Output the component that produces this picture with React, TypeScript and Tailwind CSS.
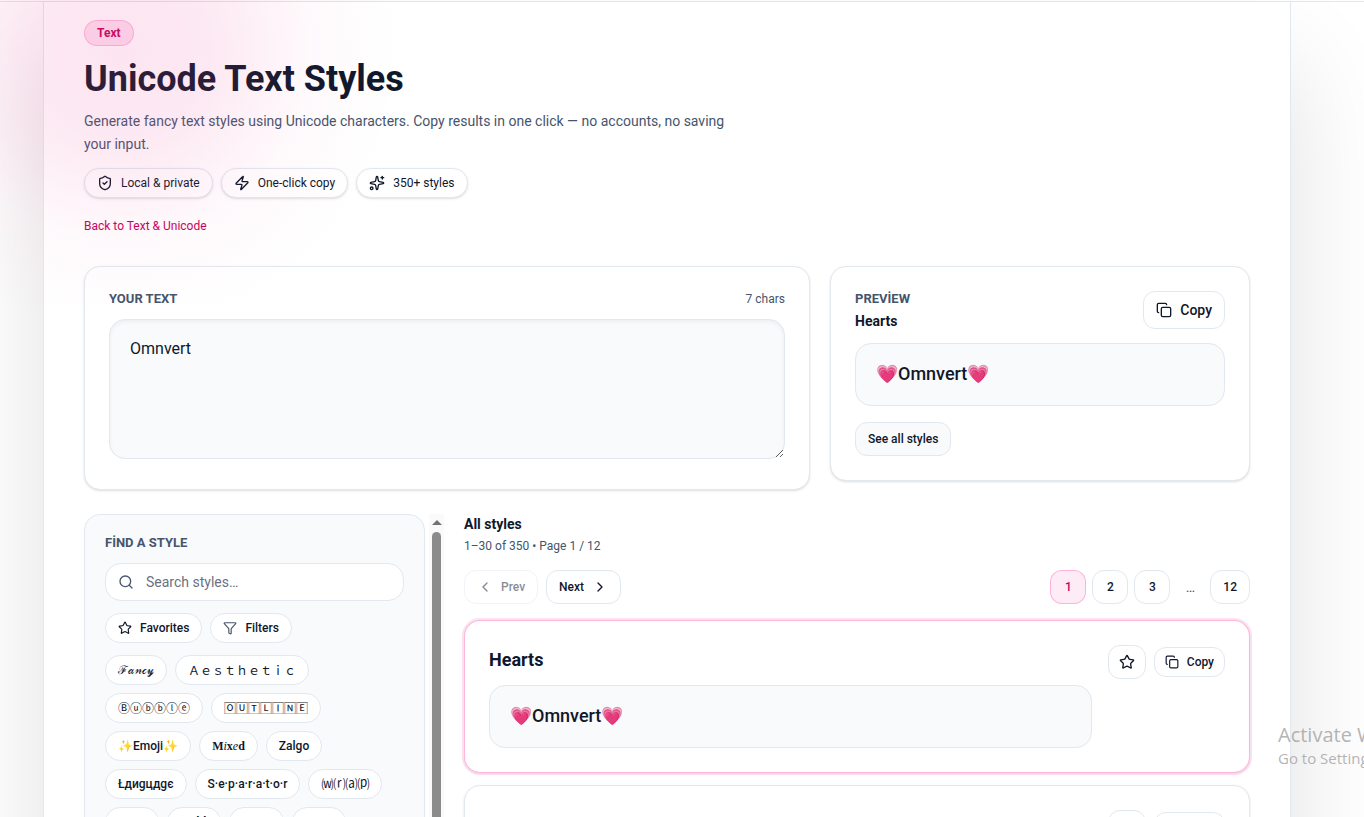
import { useState } from "react";
import type { ReactNode } from "react";
import { ChevronLeft, ChevronRight, Copy, Funnel, Search, ShieldCheck, Sparkles, Star, Zap } from "lucide-react";

const badges = [
    { icon: ShieldCheck, label: "Local & private" },
    { icon: Zap, label: "One-click copy" },
    { icon: Sparkles, label: "350+ styles" },
];

// symbol ranges that read best in the full-width face
const wide = "font-normal font-['Noto_Sans_CJK_JP',sans-serif]";

const tags: { label: ReactNode; className?: string }[] = [
    { label: "ℱ𝒶𝓃𝒸𝓎", className: "font-normal" },
    { label: "Ａｅｓｔｈｅｔｉｃ", className: wide },
    { label: "Ⓑⓤⓑⓑⓛⓔ", className: wide },
    { label: "🄾🅄🅃🄻🄸🄽🄴", className: wide },
    { label: "✨Emoji✨" },
    {
        label: (
            <>
                M<i className="font-normal">i</i>x<i className="font-normal">e</i>d
            </>
        ),
        className: "font-bold font-['Liberation_Serif',serif]",
    },
    { label: "Zalgo" },
    { label: "Łдиgцдgє" },
    { label: "S·e·p·a·r·a·t·o·r" },
    { label: "⒲⒭⒜⒫", className: wide },
    { label: "Rune" },
    { label: "Bold", className: "font-bold" },
    { label: "Wavy" },
    { label: "Star" },
];

const pages = ["1", "2", "3", "…", "12"];

function StyleBox({ children }: { children: ReactNode }) {
    return (
        <div className="rounded-2xl border border-slate-200 bg-slate-50 px-5 pt-[15px] pb-[17px] text-lg leading-[29px] font-medium text-slate-900">
            {children}
        </div>
    );
}

function StyleCard({ name, text, active }: { name: string; text: string; active?: boolean }) {
    return (
        <article
            className={
                active
                    ? "flex items-start justify-between gap-4 rounded-2xl border border-pink-300/80 bg-white p-6 shadow-sm ring-2 ring-pink-200/60"
                    : "flex items-start justify-between gap-4 rounded-2xl border border-slate-200 bg-white p-6 shadow-sm"
            }
        >
            <div className="min-w-0 flex-1">
                <h3 className="mb-[10px] text-lg leading-[30px] font-bold text-slate-900">{name}</h3>
                <StyleBox>{text}</StyleBox>
            </div>
            <div className="flex items-center gap-2">
                <button type="button" aria-label="Favorite" className="rounded-xl border border-slate-200 bg-white px-[10px] py-2 text-slate-900">
                    <Star size={16} />
                </button>
                <button type="button" className="flex items-center gap-2 rounded-xl border border-slate-200 bg-white px-[10px] py-[6px] text-xs font-medium text-slate-900">
                    <Copy size={14} />
                    Copy
                </button>
            </div>
        </article>
    );
}

export default function App() {
    const [text, setText] = useState("Omnvert");
    const [query, setQuery] = useState("");
    const result = `💗${text}💗`;

    return (
        <div className="relative h-screen overflow-hidden bg-white font-['Roboto','Noto_Sans',sans-serif] text-slate-900">
            <div className="h-[2px] border-b border-slate-200" />
            <main className="mr-[73px] ml-[43px] border-x border-slate-200 bg-white px-10 pt-[18px] pb-20 shadow-[0_60px_100px_rgba(0,0,0,0.12)]">
                <header className="flex flex-col items-start">
                    <span className="rounded-full border border-pink-300/70 bg-pink-200/60 px-3 py-1 text-xs font-bold text-pink-700">Text</span>
                    <h1 className="mt-3 text-4xl leading-[42px] font-bold">Unicode Text Styles</h1>
                    <p className="mt-[10px] max-w-[660px] text-sm leading-[23px] text-slate-600">
                        Generate fancy text styles using Unicode characters. Copy results in one click — no accounts, no saving your input.
                    </p>
                    <ul className="mt-3 flex gap-2 text-xs">
                        {badges.map(({ icon: Icon, label }) => (
                            <li key={label} className="flex items-center gap-2 rounded-full border border-slate-200 bg-white px-3 py-[6px] shadow-sm">
                                <Icon size={16} />
                                {label}
                            </li>
                        ))}
                    </ul>
                    <a href="#text" className="mt-5 text-xs text-pink-700">
                        Back to Text &amp; Unicode
                    </a>
                </header>

                <section className="mt-8 grid grid-cols-[minmax(0,1fr)_420px] items-start gap-5">
                    <div className="rounded-2xl border border-slate-200 bg-white px-6 pt-6 pb-[30px] shadow-sm">
                        <div className="flex items-center justify-between text-xs">
                            <label htmlFor="text" className="text-[13px] leading-4 font-bold text-slate-600">
                                YOUR TEXT
                            </label>
                            <span className="text-slate-600">{text.length} chars</span>
                        </div>
                        <textarea
                            id="text"
                            value={text}
                            onChange={(e) => setText(e.target.value)}
                            className="mt-3 block h-[140px] w-full resize-y rounded-2xl border border-slate-200 bg-slate-50 px-5 py-4 text-base leading-[26px] shadow-inner outline-none"
                        />
                    </div>
                    <div className="rounded-2xl border border-slate-200 bg-white p-6 shadow-sm">
                        <div className="flex items-start justify-between">
                            <div>
                                <p className="text-[13px] leading-4 font-bold text-slate-600">PREVİEW</p>
                                <p className="mt-1 text-sm font-bold">Hearts</p>
                            </div>
                            <button type="button" className="flex items-center gap-2 rounded-xl border border-slate-200 bg-white px-3 py-2 text-sm font-medium">
                                <Copy size={16} />
                                Copy
                            </button>
                        </div>
                        <div className="mt-3">
                            <StyleBox>{result}</StyleBox>
                        </div>
                        <button type="button" className="mt-4 rounded-xl border border-slate-200 bg-slate-50 px-3 py-2 text-xs font-medium">
                            See all styles
                        </button>
                    </div>
                </section>

                <section className="mt-6 grid grid-cols-[360px_minmax(0,1fr)] gap-5">
                    <aside className="flex h-[600px] overflow-hidden">
                        <div className="flex-1 rounded-t-2xl border border-slate-200 bg-slate-50 p-5">
                            <label htmlFor="search" className="block text-[13px] leading-4 font-bold text-slate-600">
                                FİND A STYLE
                            </label>
                            <div className="mt-3 flex items-center gap-3 rounded-2xl border border-slate-200 bg-white px-3 py-2 text-slate-600">
                                <Search size={16} />
                                <input
                                    id="search"
                                    type="text"
                                    placeholder="Search styles…"
                                    value={query}
                                    onChange={(e) => setQuery(e.target.value)}
                                    className="h-5 min-w-0 flex-1 text-sm outline-none placeholder:text-gray-500"
                                />
                            </div>
                            <div className="mt-3 flex gap-2 text-xs font-medium">
                                <button type="button" className="flex items-center gap-2 rounded-full border border-slate-200 bg-white px-3 py-[6px]">
                                    <Star size={14} />
                                    Favorites
                                </button>
                                <button type="button" className="flex items-center gap-2 rounded-full border border-slate-200 bg-white px-3 py-[6px]">
                                    <Funnel size={14} className="text-slate-600" />
                                    Filters
                                </button>
                            </div>
                            <div className="mt-3 flex flex-wrap gap-2 text-xs font-medium">
                                {tags.map(({ label, className }, i) => (
                                    <button key={i} type="button" className="h-[30px] min-w-[54px] rounded-full border border-slate-200 bg-white px-3">
                                        <span className={className}>{label}</span>
                                    </button>
                                ))}
                            </div>
                        </div>
                        <div aria-hidden className="ml-1 flex w-[15px] flex-col items-center bg-neutral-50 pt-[6px]">
                            <span className="size-0 border-x-[5px] border-b-[5px] border-x-transparent border-b-neutral-500" />
                            <span className="mt-[7px] w-[9px] flex-1 rounded-full bg-[#8b8b8b]" />
                        </div>
                    </aside>

                    <div>
                        <h2 className="text-sm font-bold">All styles</h2>
                        <p className="mt-1 text-xs text-slate-600">1–30 of 350 • Page 1 / 12</p>
                        <nav className="mt-4 mb-4 flex items-center justify-between text-xs font-medium">
                            <div className="flex gap-2">
                                <button type="button" disabled className="flex items-center gap-2 rounded-xl border border-slate-200 px-3 py-2 opacity-50">
                                    <ChevronLeft size={16} />
                                    Prev
                                </button>
                                <button type="button" className="flex items-center gap-2 rounded-xl border border-slate-200 px-3 py-2">
                                    Next
                                    <ChevronRight size={16} />
                                </button>
                            </div>
                            <div className="flex items-center gap-[6px]">
                                {pages.map((page) =>
                                    page === "…" ? (
                                        <span key={page} className="w-7 text-center text-sm font-normal text-slate-600">
                                            {page}
                                        </span>
                                    ) : (
                                        <button
                                            key={page}
                                            type="button"
                                            className={
                                                page === "1"
                                                    ? "min-w-9 rounded-xl border border-pink-300/80 bg-pink-100/80 px-3 py-2 text-pink-700"
                                                    : "min-w-9 rounded-xl border border-slate-200 bg-white px-3 py-2"
                                            }
                                        >
                                            {page}
                                        </button>
                                    )
                                )}
                            </div>
                        </nav>
                        <div className="flex flex-col gap-3">
                            <StyleCard name="Hearts" text={result} active />
                            <StyleCard name="Sticky Note Bubble" text={`☁${text}☁`} />
                        </div>
                    </div>
                </section>
            </main>

            {/* soft pink glow over the page corner */}
            <div className="pointer-events-none absolute top-0 left-0 h-[305px] w-[420px] bg-[radial-gradient(circle_at_120px_50px,rgba(236,72,153,0.14),rgba(236,72,153,0.12)_90px,rgba(236,72,153,0.03)_190px,transparent_280px)]" />

            <div className="pointer-events-none absolute top-[723px] left-[1278px] whitespace-nowrap font-['Open_Sans',sans-serif] text-neutral-400/80">
                <p className="text-xl leading-6">Activate Windows</p>
                <p className="text-[15px] leading-[22px]">Go to Settings to activate Windows.</p>
            </div>
        </div>
    );
}
